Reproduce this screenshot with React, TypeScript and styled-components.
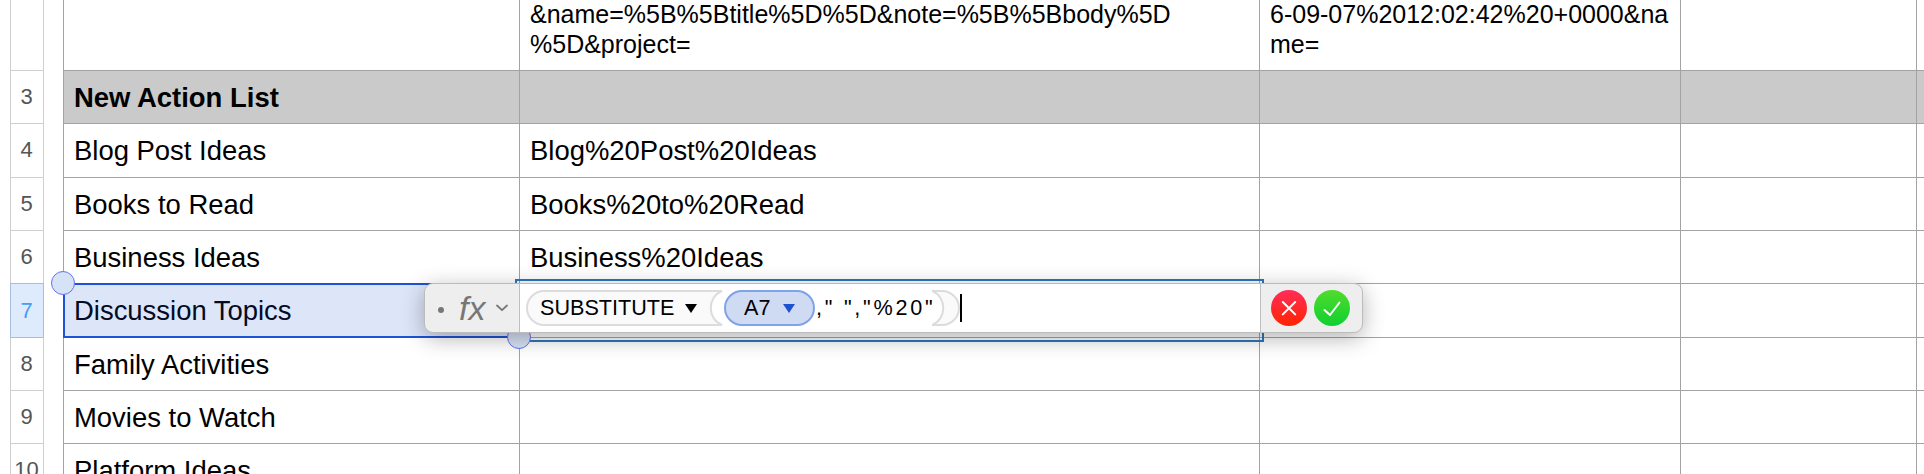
import React from "react";
import styled, { createGlobalStyle, css } from "styled-components";

const Global = createGlobalStyle`
  body { margin: 0; background: #fff; }
  * { box-sizing: border-box; }
`;

const Sheet = styled.main`
  position: relative;
  display: flex;
  width: 1924px;
  height: 474px;
  overflow: hidden;
  background: #fff;
  color: #000;
  font-family: "Liberation Sans", Arial, sans-serif;
`;

const Gutter = styled.div`
  flex: none;
  width: 34px;
  margin: 0 19px 0 10px;
`;

const RowNumber = styled.div<{ $h: number; $active?: boolean }>`
  position: relative;
  display: flex;
  align-items: flex-start;
  justify-content: center;
  height: ${(p) => p.$h}px;
  padding: 13px 1px 0 0;
  border: 1px solid #cfcfcf;
  border-top: 0;
  color: #555;
  font-size: 22px;
  line-height: 26px;
  ${(p) =>
    p.$active &&
    css`
      height: ${p.$h + 1}px;
      margin-top: -1px;
      padding-top: 14px;
      border: 1px solid #a5bfdd;
      background: #deebfc;
      color: #4a9bf5;
    `}
`;

const Table = styled.div`
  flex: none;
  width: 1861px;
  border-left: 1px solid #a3a3a3;
`;

const Row = styled.div<{ $h: number; $header?: boolean }>`
  display: grid;
  grid-template-columns: 456px 740px 421px 236px 1fr;
  height: ${(p) => p.$h}px;
  border-bottom: 1px solid #a3a3a3;
  background: ${(p) => (p.$header ? "#cacaca" : "#fff")};
  font-weight: ${(p) => (p.$header ? 700 : 400)};
`;

const Cell = styled.div`
  display: flex;
  align-items: flex-start;
  min-width: 0;
  padding: 11px 0 0 10px;
  border-right: 1px solid #a3a3a3;
  font-size: 27.45px;
  line-height: 32px;
  white-space: pre;
`;

const WrappedCell = styled(Cell)`
  align-items: flex-end;
  height: 70px;
  padding-top: 0;
  padding-bottom: 11px;
  font-size: 25px;
  line-height: 30px;
`;

const Selection = styled.div`
  position: absolute;
  left: 63px;
  top: 283px;
  width: 457px;
  height: 55px;
  border: 2px solid #1d53d6;
  background: rgba(29, 83, 214, 0.15);
`;

const EditOutline = styled.div`
  position: absolute;
  left: 515px;
  top: 279px;
  width: 749px;
  height: 63px;
  border: 2px solid #2b78c0;
`;

const Handle = styled.div<{ $x: number; $y: number }>`
  position: absolute;
  left: ${(p) => p.$x - 12}px;
  top: ${(p) => p.$y - 12}px;
  width: 24px;
  height: 24px;
  border: 1px solid #6672f3;
  border-radius: 50%;
  background: #d6e2f6;
`;

const FormulaBar = styled.div`
  position: absolute;
  left: 424px;
  top: 283px;
  display: flex;
  width: 939px;
  height: 50px;
  border: 1px solid #bcbcbc;
  border-radius: 9px;
  background: #eee;
  box-shadow: 0 5px 22px rgba(0, 0, 0, 0.3);
`;

const FunctionMenu = styled.div`
  display: flex;
  align-items: center;
  width: 94px;
  padding-left: 13px;
  color: #777;
`;

const Dot = styled.span`
  width: 6px;
  height: 6px;
  margin-top: 3px;
  border-radius: 50%;
  background: #777;
`;

const Fx = styled.span`
  width: 30px;
  margin: 0 7px 0 15px;
  font-size: 34px;
  font-style: italic;
  line-height: 40px;
`;

const Editor = styled.div`
  display: flex;
  align-items: center;
  width: 742px;
  padding-left: 6px;
  border: solid #bfbfbf;
  border-width: 0 1px;
  background: #fff;
  font-size: 21.6px;
  line-height: 26px;
`;

const FunctionToken = styled.div`
  position: relative;
  display: flex;
  align-items: center;
  gap: 11px;
  width: 198px;
  height: 36px;
  padding-left: 14px;
`;

const TokenShape = styled.svg`
  position: absolute;
  inset: 0;
  z-index: 0;
`;

const TokenLabel = styled.span`
  position: relative;
`;

const Arrow = styled.svg`
  position: relative;
  flex: none;
`;

const Reference = styled.div`
  display: flex;
  align-items: center;
  gap: 13px;
  width: 91px;
  height: 36px;
  padding-left: 18px;
  border: 2px solid #7fa2e8;
  border-radius: 18px;
  background: #cfdbf3;
`;

const Literal = styled.span`
  width: 117px;
  padding-left: 1px;
  letter-spacing: 2.75px;
  white-space: pre;
`;

const Caret = styled.span`
  width: 2px;
  height: 28px;
  background: #000;
`;

const Actions = styled.div`
  display: flex;
  align-items: center;
  gap: 7px;
  padding-left: 10px;
`;

const RoundButton = styled.button<{ $from: string; $to: string }>`
  display: block;
  width: 36px;
  height: 36px;
  padding: 0;
  border: 0;
  border-radius: 50%;
  background: linear-gradient(${(p) => p.$from}, ${(p) => p.$to});
`;

type RowData = { h: number; n: string; a: string; b?: string };

const rows: RowData[] = [
  { h: 53, n: "3", a: "New Action List" },
  { h: 54, n: "4", a: "Blog Post Ideas", b: "Blog%20Post%20Ideas" },
  { h: 53, n: "5", a: "Books to Read", b: "Books%20to%20Read" },
  { h: 53, n: "6", a: "Business Ideas", b: "Business%20Ideas" },
  { h: 54, n: "7", a: "Discussion Topics" },
  { h: 53, n: "8", a: "Family Activities" },
  { h: 53, n: "9", a: "Movies to Watch" },
  { h: 53, n: "10", a: "Platform Ideas" },
];

const Triangle = ({ color }: { color: string }) => (
  <Arrow width="12" height="9" viewBox="0 0 12 9">
    <path d="M0 0H12L6 9Z" fill={color} />
  </Arrow>
);

export default function App() {
  return (
    <>
      <Global />
      <Sheet>
        <Gutter>
          <RowNumber $h={71} />
          {rows.map((r) => (
            <RowNumber key={r.n} $h={r.h} $active={r.n === "7"}>
              {r.n}
            </RowNumber>
          ))}
        </Gutter>
        <Table>
          <Row $h={71}>
            <WrappedCell />
            <WrappedCell>{"&name=%5B%5Btitle%5D%5D&note=%5B%5Bbody%5D\n%5D&project="}</WrappedCell>
            <WrappedCell>{"6-09-07%2012:02:42%20+0000&na\nme="}</WrappedCell>
            <WrappedCell />
          </Row>
          {rows.map((r) => (
            <Row key={r.n} $h={r.h} $header={r.n === "3"}>
              <Cell>{r.a}</Cell>
              <Cell>{r.b}</Cell>
              <Cell />
              <Cell />
            </Row>
          ))}
        </Table>
        <EditOutline />
        <Selection />
        <Handle $x={63} $y={283} />
        <Handle $x={519} $y={337} />
        <FormulaBar>
          <FunctionMenu>
            <Dot />
            <Fx>fx</Fx>
            <svg width="12" height="8" viewBox="0 0 12 8" fill="none" stroke="#777" strokeWidth="1.8">
              <path d="M1 1.5L6 6.2L11 1.5" strokeLinecap="round" strokeLinejoin="round" />
            </svg>
          </FunctionMenu>
          <Editor>
            <FunctionToken>
              <TokenShape width="198" height="36" viewBox="0 0 198 36">
                <path
                  d="M196 1H18A17 17 0 0 0 18 35H196C181 29 181 7 196 1Z"
                  fill="#fafafa"
                />
                <path
                  d="M196 1H18A17 17 0 0 0 18 35H196C181 29 181 7 196 1"
                  fill="none"
                  stroke="#dcdcdc"
                  strokeWidth="2"
                />
              </TokenShape>
              <TokenLabel>SUBSTITUTE</TokenLabel>
              <Triangle color="#000" />
            </FunctionToken>
            <Reference>
              A7
              <Triangle color="#1c52cf" />
            </Reference>
            <Literal>{'," ","%20"'}</Literal>
            <svg width="28" height="36" viewBox="0 0 28 36">
              <path
                d="M0 1H10A17 17 0 0 1 10 35H0C15 29 15 7 0 1Z"
                fill="#fafafa"
                stroke="#dcdcdc"
                strokeWidth="2"
              />
            </svg>
            <Caret />
          </Editor>
          <Actions>
            <RoundButton $from="#ff2d5a" $to="#ff2400" aria-label="Cancel">
              <svg width="36" height="36" fill="none" stroke="#fff" strokeWidth="2" strokeLinecap="round">
                <path d="M11.8 12L24.2 24.4M24.2 12L11.8 24.4" />
              </svg>
            </RoundButton>
            <RoundButton $from="#4fdc2c" $to="#10d030" aria-label="Accept">
              <svg width="36" height="36" fill="none" stroke="#fff" strokeWidth="2" strokeLinecap="round" strokeLinejoin="round">
                <path d="M10.5 20L16 25L25.5 12.5" />
              </svg>
            </RoundButton>
          </Actions>
        </FormulaBar>
      </Sheet>
    </>
  );
}
